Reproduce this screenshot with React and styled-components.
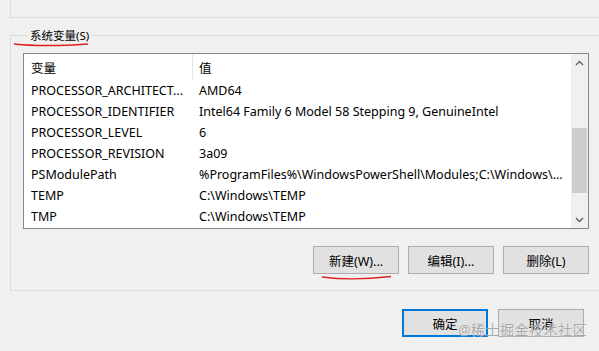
import React from "react";
import styled, { createGlobalStyle } from "styled-components";

const GlobalStyle = createGlobalStyle`
  html, body {
    margin: 0;
    padding: 0;
    background: #f0f0f0;
  }
  body {
    width: 599px;
    height: 351px;
    overflow: hidden;
    font-family: "Noto Sans", "Noto Sans CJK SC", sans-serif;
    font-size: 12.5px;
    color: #000;
  }
`;

const Page = styled.div`
  position: relative;
  width: 599px;
  height: 351px;
  display: flex;
  flex-direction: column;
`;

const UserGroupTail = styled.div`
  margin-left: 10px;
  height: 17px;
  border-left: 1px solid #dcdcdc;
  border-bottom: 1px solid #dcdcdc;
`;

const Group = styled.fieldset`
  margin: 9px 0 0 10px;
  padding: 9px 10px 16px 12px;
  border: 1px solid #dcdcdc;
  border-right: none;
  min-width: 0;
`;

const Legend = styled.legend`
  position: relative;
  margin-left: 5px;
  padding: 0 2px;
  line-height: 17px;
  font-size: 11.5px;
`;

const ListBox = styled.div`
  height: 174px;
  border: 1px solid #828790;
  background: #fff;
  display: flex;
`;

const Table = styled.div`
  flex: 1;
  display: flex;
  flex-direction: column;
  overflow: hidden;
`;

const Row = styled.div`
  display: grid;
  grid-template-columns: 169px 1fr;
  height: ${(p) => (p.$header ? "25px" : "21px")};
  align-items: center;
  white-space: nowrap;
`;

const Cell = styled.div`
  height: 100%;
  display: flex;
  align-items: center;
  padding-left: ${(p) => (p.$second ? "6px" : "7px")};
  padding-top: 1px;
  box-sizing: border-box;
  border-right: ${(p) => (p.$divider ? "1px solid #e5e5e5" : "none")};
  overflow: hidden;
`;

const ScrollBar = styled.div`
  width: 17px;
  background: #f0f0f0;
  display: flex;
  flex-direction: column;
  align-items: center;
`;

const Arrow = styled.div`
  height: 17px;
  width: 17px;
  display: flex;
  align-items: center;
  justify-content: center;
`;

const Track = styled.div`
  flex: 1;
  width: 100%;
  display: flex;
  flex-direction: column;
  padding: 0 1px;
  box-sizing: border-box;
`;

const Thumb = styled.div`
  margin-top: 57px;
  height: 65px;
  background: #cdcdcd;
`;

const ButtonRow = styled.div`
  display: flex;
  justify-content: flex-end;
  gap: 9px;
  margin-top: 17px;
`;

const Button = styled.button`
  position: relative;
  width: 86px;
  height: 28px;
  box-sizing: border-box;
  background: #e1e1e1;
  border: ${(p) => (p.$default ? "2px solid #0078d7" : "1px solid #adadad")};
  font-family: "Noto Sans", "Noto Sans CJK SC", sans-serif;
  font-size: 12.5px;
  color: #000;
  padding: 0;
  border-radius: 0;
`;

const Footer = styled.div`
  display: flex;
  justify-content: flex-end;
  gap: 10px;
  padding: 18px 15px 0 0;
`;

const Scribble = styled.svg`
  position: absolute;
  left: ${(p) => p.$x}px;
  top: ${(p) => p.$y}px;
  overflow: visible;
  pointer-events: none;
`;

const Watermark = styled.div`
  position: absolute;
  right: 12px;
  bottom: 12px;
  font-size: 14px;
  color: rgba(140, 140, 140, 0.75);
  letter-spacing: 0.5px;
  text-shadow: 0 0 1px #fff;
  pointer-events: none;
`;

const rows = [
  ["PROCESSOR_ARCHITECT...", "AMD64"],
  ["PROCESSOR_IDENTIFIER", "Intel64 Family 6 Model 58 Stepping 9, GenuineIntel"],
  ["PROCESSOR_LEVEL", "6"],
  ["PROCESSOR_REVISION", "3a09"],
  ["PSModulePath", "%ProgramFiles%\\WindowsPowerShell\\Modules;C:\\Windows\\..."],
  ["TEMP", "C:\\Windows\\TEMP"],
  ["TMP", "C:\\Windows\\TEMP"],
];

function Chevron({ up }) {
  return (
    <svg width="9" height="6" viewBox="0 0 9 6">
      <path
        d={up ? "M1 5 L4.5 1.5 L8 5" : "M1 1 L4.5 4.5 L8 1"}
        fill="none"
        stroke="#606060"
        strokeWidth="1.4"
      />
    </svg>
  );
}

export default function App() {
  return (
    <Page>
      <GlobalStyle />
      <UserGroupTail />
      <Group>
        <Legend>系统变量(S)</Legend>
        <ListBox>
          <Table>
            <Row $header>
              <Cell $divider>变量</Cell>
              <Cell $second>值</Cell>
            </Row>
            {rows.map(([name, value]) => (
              <Row key={name}>
                <Cell>{name}</Cell>
                <Cell $second>{value}</Cell>
              </Row>
            ))}
          </Table>
          <ScrollBar>
            <Arrow>
              <Chevron up />
            </Arrow>
            <Track>
              <Thumb />
            </Track>
            <Arrow>
              <Chevron />
            </Arrow>
          </ScrollBar>
        </ListBox>
        <ButtonRow>
          <Button>新建(W)...</Button>
          <Button>编辑(I)...</Button>
          <Button>删除(L)</Button>
        </ButtonRow>
      </Group>
      <Footer>
        <Button $default>确定</Button>
        <Button>取消</Button>
      </Footer>
      <Scribble $x={14} $y={43} width="76" height="5">
        <path d="M0 1 Q30 4 74 1" fill="none" stroke="#e02020" strokeWidth="1.3" />
      </Scribble>
      <Scribble $x={322} $y={276} width="70" height="5">
        <path d="M0 1 Q30 5 69 0.5" fill="none" stroke="#e02020" strokeWidth="1.3" />
      </Scribble>
      <Watermark>@稀土掘金技术社区</Watermark>
    </Page>
  );
}
